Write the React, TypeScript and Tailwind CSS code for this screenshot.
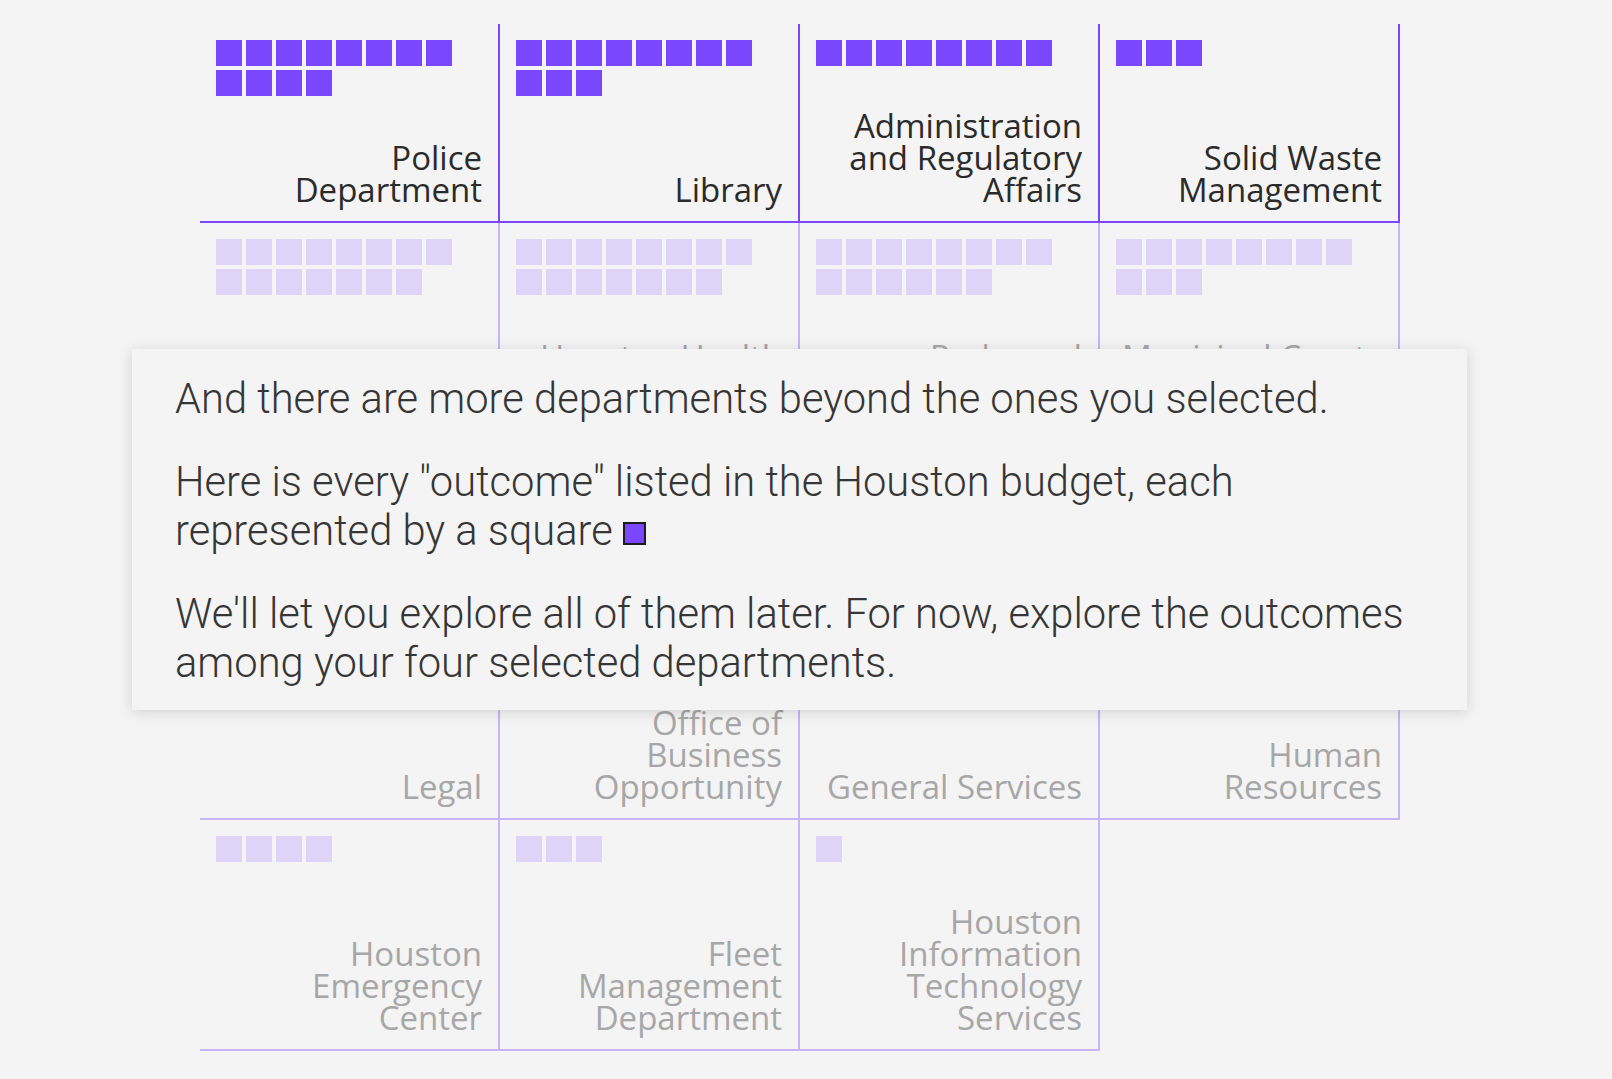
import React from 'react'

type Dept = { lines: string[]; count: number; selected?: boolean }

// every department in the budget, in the order they are listed
const departments: Dept[] = [
  { lines: ['Police', 'Department'], count: 12, selected: true },
  { lines: ['Library'], count: 11, selected: true },
  { lines: ['Administration', 'and Regulatory', 'Affairs'], count: 8, selected: true },
  { lines: ['Solid Waste', 'Management'], count: 3, selected: true },
  { lines: ['Fire Department'], count: 15 },
  { lines: ['Houston Health', 'Department'], count: 15 },
  { lines: ['Parks and', 'Recreation'], count: 14 },
  { lines: ['Municipal Courts', 'Department'], count: 11 },
  { lines: ['Planning and', 'Development'], count: 6 },
  { lines: ['Houston Public', 'Works'], count: 5 },
  { lines: ['Finance'], count: 5 },
  { lines: ['Housing and', 'Community', 'Development'], count: 4 },
  { lines: ['Legal'], count: 4 },
  { lines: ['Office of', 'Business', 'Opportunity'], count: 4 },
  { lines: ['General Services'], count: 3 },
  { lines: ['Human', 'Resources'], count: 3 },
  { lines: ['Houston', 'Emergency', 'Center'], count: 4 },
  { lines: ['Fleet', 'Management', 'Department'], count: 3 },
  { lines: ['Houston', 'Information', 'Technology', 'Services'], count: 1 },
]

function DeptCell({ dept }: { dept: Dept }) {
  const squares = Array.from({ length: dept.count })
  return (
    <div
      className={
        dept.selected
          ? 'flex flex-col pt-4 pl-4 pr-4 pb-[15px] border-r-2 border-b-2 border-[#7a47fe]'
          : 'flex flex-col pt-4 pl-4 pr-4 pb-[15px] border-r-2 border-b-2 border-[#c6b5fa]'
      }
    >
      <div className="flex flex-wrap content-start gap-1 w-[236px] h-[56px]">
        {squares.map((_, i) => (
          <div
            key={i}
            className={dept.selected ? 'w-[26px] h-[26px] bg-[#7a47fe]' : 'w-[26px] h-[26px] bg-[#ddd4f8]'}
          />
        ))}
      </div>
      <div
        className={
          dept.selected
            ? 'mt-[14px] flex-1 min-h-[96px] flex flex-col justify-end items-end text-right text-[#2b2b2b]'
            : 'mt-[14px] flex-1 min-h-[96px] flex flex-col justify-end items-end text-right text-[#a7a7a7]'
        }
      >
        {dept.lines.map((l) => (
          <span key={l} className="block whitespace-nowrap text-[33px] leading-[32px]">
            {l}
          </span>
        ))}
      </div>
    </div>
  )
}

export default function App() {
  return (
    <div className="min-h-screen bg-[#f4f4f4] pt-6 pl-[200px] font-['Open_Sans',sans-serif]">
      <div className="relative w-[1200px]">
        <div className="grid grid-cols-[repeat(4,300px)]">
          {departments.map((d) => (
            <DeptCell key={d.lines.join(' ')} dept={d} />
          ))}
        </div>

        <div className="absolute left-[-68px] top-[325px] w-[1335px] bg-[#f4f4f4] shadow-[0_2px_14px_rgba(0,0,0,0.14)] pt-[25px] pb-[23px] px-[43px] text-[#363636] font-['Roboto',sans-serif] font-light text-[41.7px] leading-[49px]">
          <p className="mb-[34px]">And there are more departments beyond the ones you selected.</p>
          <p className="mb-[34px]">
            Here is every "outcome" listed in the Houston budget, each represented by a square{' '}
            <span className="inline-block w-[23px] h-[23px] border-2 border-[#1d1d1d] bg-[#7a47fe] align-baseline" />
          </p>
          <p>
            We'll let you explore all of them later. For now, explore the outcomes among your four selected
            departments.
          </p>
        </div>
      </div>
    </div>
  )
}
